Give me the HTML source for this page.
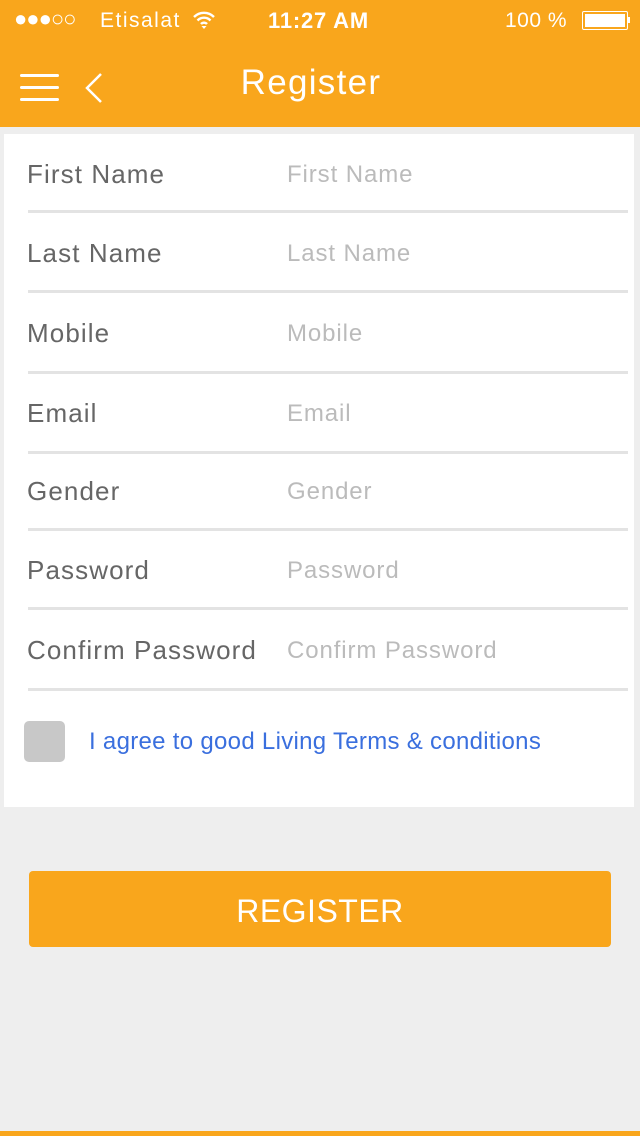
<!DOCTYPE html>
<html><head><style>
body{margin:0;width:640px;height:1136px;background:#eeeeee;font-family:"Liberation Sans",sans-serif;position:relative;overflow:hidden}
.hdr{position:absolute;left:0;top:0;width:640px;height:127px;background:#f9a61c;color:#fff}
.card{position:absolute;left:4px;top:134px;width:630px;height:673px;background:#fff}
.lbl{position:absolute;left:27px;font-size:26px;color:#666;letter-spacing:1.1px}
.ph{position:absolute;left:287px;font-size:24px;color:#bbb;letter-spacing:0.9px}
.sep{position:absolute;left:28px;width:600px;height:3px;background:#e3e3e3}
</style></head><body>
<div class="hdr">
<div style="position:absolute;left:14px;top:6px;font-size:22px;letter-spacing:-1px">●●●○○</div>
<div style="position:absolute;left:100px;top:9px;font-size:21px;letter-spacing:1.5px">Etisalat</div>
<svg style="position:absolute;left:192px;top:10px" width="24" height="20" viewBox="0 0 24 20"><path d="M2 7a14 14 0 0 1 20 0M5.5 10.5a9 9 0 0 1 13 0M9 14a4 4 0 0 1 6 0" stroke="#fff" stroke-width="2.4" fill="none"/><path d="M12 19l-2.5-3h5z" fill="#fff"/></svg>
<div style="position:absolute;left:268px;top:8px;font-size:22px;font-weight:bold;letter-spacing:0.8px">11:27 AM</div>
<div style="position:absolute;left:505px;top:9px;font-size:21px;letter-spacing:0.5px">100 %</div>
<div style="position:absolute;left:582px;top:11px;width:44px;height:17px;border:1px solid #fff;border-radius:2px"><div style="margin:2px;height:13px;background:#fff"></div></div>
<div style="position:absolute;left:628px;top:17px;width:2px;height:6px;background:#fff"></div>
<div style="position:absolute;left:20px;top:74px;width:39px;height:3px;background:#fff;border-radius:2px"></div>
<div style="position:absolute;left:20px;top:86px;width:39px;height:3px;background:#fff;border-radius:2px"></div>
<div style="position:absolute;left:20px;top:98px;width:39px;height:3px;background:#fff;border-radius:2px"></div>
<svg style="position:absolute;left:84px;top:72px" width="20" height="32"><path d="M17 2L3 16l14 14" stroke="#fff" stroke-width="2.5" fill="none"/></svg>
<div style="position:absolute;left:0;width:622px;text-align:center;top:63px;font-size:35px;letter-spacing:1.3px">Register</div>
</div>
<div class="card"></div>
<div class="lbl" style="top:159px">First Name</div><div class="ph" style="top:161px">First Name</div><div class="sep" style="top:210px"></div>
<div class="lbl" style="top:238px">Last Name</div><div class="ph" style="top:240px">Last Name</div><div class="sep" style="top:290px"></div>
<div class="lbl" style="top:318px">Mobile</div><div class="ph" style="top:320px">Mobile</div><div class="sep" style="top:371px"></div>
<div class="lbl" style="top:398px">Email</div><div class="ph" style="top:400px">Email</div><div class="sep" style="top:451px"></div>
<div class="lbl" style="top:476px">Gender</div><div class="ph" style="top:478px">Gender</div><div class="sep" style="top:528px"></div>
<div class="lbl" style="top:555px">Password</div><div class="ph" style="top:557px">Password</div><div class="sep" style="top:607px"></div>
<div class="lbl" style="top:635px">Confirm Password</div><div class="ph" style="top:637px">Confirm Password</div><div class="sep" style="top:688px"></div>
<div style="position:absolute;left:24px;top:721px;width:41px;height:41px;background:#c8c8c8;border-radius:5px"></div>
<div style="position:absolute;left:89px;top:728px;font-size:24px;color:#3a6fde;letter-spacing:0.3px">I agree to good Living Terms &amp; conditions</div>
<div style="position:absolute;left:29px;top:871px;width:582px;height:76px;background:#f9a61c;border-radius:4px;color:#fff;font-size:32px;text-align:center;line-height:80px;letter-spacing:0.5px">REGISTER</div>
<div style="position:absolute;left:0;top:1131px;width:640px;height:5px;background:#f9a61c"></div>
</body></html>
